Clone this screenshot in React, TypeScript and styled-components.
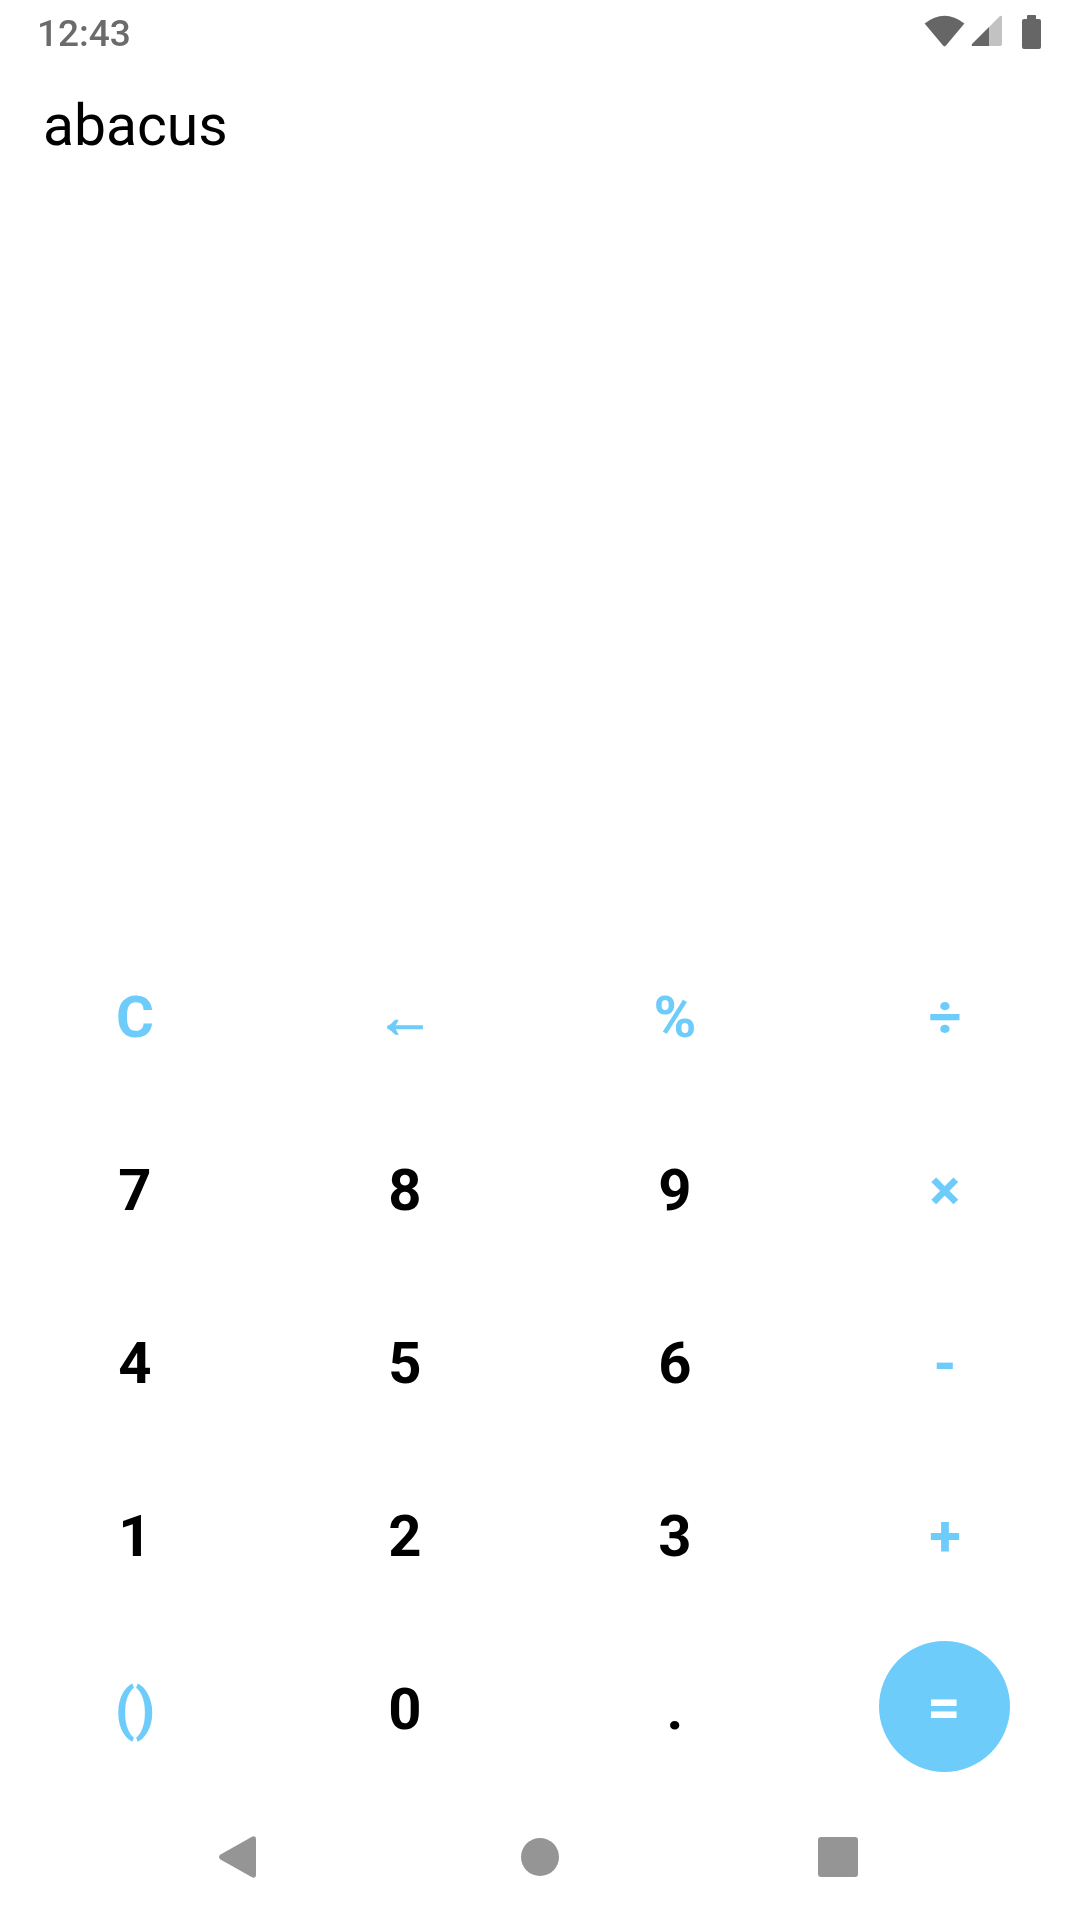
import React from 'react';
import styled, {createGlobalStyle} from 'styled-components';

const ACCENT = '#6eccfa';

const keys = [
    {label: 'C', accent: true},
    {label: '←', accent: true, heavy: true},
    {label: '%', accent: true},
    {label: '÷', accent: true},
    {label: '7'},
    {label: '8'},
    {label: '9'},
    {label: '×', accent: true},
    {label: '4'},
    {label: '5'},
    {label: '6'},
    {label: '-', accent: true},
    {label: '1'},
    {label: '2'},
    {label: '3'},
    {label: '+', accent: true},
    {label: '()', accent: true},
    {label: '0'},
    {label: '.'},
    {label: '=', round: true}
];

const App = () => {
    return (
        <Screen>
            <GlobalStyle />
            <StatusBar>
                <Clock>12:43</Clock>
                <StatusIcons>
                    <svg width='41' height='32' viewBox='0 0 41 32'>
                        <path d='M0.6 8.6 Q20.5 -7 40.4 8.6 L22 30.6 Q20.5 32.2 19 30.6 Z' fill='#666666' />
                    </svg>
                    <svg width='31' height='31' viewBox='0 0 31 31'>
                        <path d='M18 12 L29 1 Q31 0 31 2 L31 29 Q31 31 29 31 L18 31 Z' fill='#c2c2c2' />
                        <path d='M18 12 L1 29 Q0 31 2 31 L18 31 Z' fill='#666666' />
                    </svg>
                    <svg width='19' height='34' viewBox='0 0 19 34'>
                        <path d='M5 4 V1 Q5 0 6 0 H13 Q14 0 14 1 V4 H17 Q19 4 19 6 V32 Q19 34 17 34 H2 Q0 34 0 32 V6 Q0 4 2 4 Z' fill='#666666' />
                    </svg>
                </StatusIcons>
            </StatusBar>
            <Title>abacus</Title>
            <Spacer />
            <Keypad>
                {keys.map(key => (
                    <Key key={key.label}>
                        {key.round ? (
                            <RoundKey>{key.label}</RoundKey>
                        ) : (
                            <KeyLabel $accent={key.accent} $heavy={key.heavy}>
                                {key.label}
                            </KeyLabel>
                        )}
                    </Key>
                ))}
            </Keypad>
            <NavBar>
                <NavButton $nudge>
                    <svg width='37' height='42' viewBox='0 0 37 42'>
                        <path d='M1.5 18.5 L33 0.8 Q37 -0.8 37 3 L37 39 Q37 42.8 33 41.2 L1.5 23.5 Q-1.5 21 1.5 18.5 Z' fill='#959595' />
                    </svg>
                </NavButton>
                <NavButton>
                    <HomeDot />
                </NavButton>
                <NavButton $nudge>
                    <RecentSquare />
                </NavButton>
            </NavBar>
        </Screen>
    );
};

export default App;

const GlobalStyle = createGlobalStyle`
    body {
        margin: 0;
        background: #ffffff;
        font-family: Roboto, "Liberation Sans", sans-serif;
    }
`;

const Screen = styled.div`
    display: flex;
    width: 1080px;
    height: 1920px;
    flex-direction: column;
    overflow: hidden;
    will-change: opacity;
`;

const StatusBar = styled.div`
    display: flex;
    height: 63px;
    align-items: center;
    justify-content: space-between;
    padding: 0 39px 0 37px;
    box-sizing: border-box;
`;

const Clock = styled.div`
    padding-top: 4px;
    font-size: 37px;
    font-weight: 500;
    color: #6b6b6b;
`;

const StatusIcons = styled.div`
    display: flex;
    align-items: center;
    gap: 6px;

    svg:not(:last-child) {
        margin-bottom: 2px;
    }

    svg:last-child {
        margin-left: 14px;
    }
`;

const Title = styled.div`
    margin-top: 30px;
    padding-left: 43px;
    font-size: 57px;
    line-height: 66px;
    color: #000000;
`;

const Spacer = styled.div`
    flex: 1;
`;

const Keypad = styled.div`
    display: grid;
    grid-template-columns: repeat(4, 270px);
    grid-auto-rows: 173px;
`;

const Key = styled.div`
    display: flex;
    align-items: center;
    justify-content: center;
`;

const KeyLabel = styled.span<{$accent?: boolean; $heavy?: boolean}>`
    padding-top: 2px;
    font-size: 58px;
    font-weight: 700;
    color: ${props => (props.$accent ? ACCENT : '#000000')};
    -webkit-text-stroke: ${props => (props.$heavy ? `1.5px ${ACCENT}` : '0')};
`;

const RoundKey = styled.div`
    display: flex;
    width: 131px;
    height: 131px;
    margin: -2px 2px 0 0;
    align-items: center;
    justify-content: center;
    border-radius: 50%;
    background: ${ACCENT};
    font-size: 58px;
    font-weight: 700;
    color: #ffffff;
`;

const NavBar = styled.div`
    display: flex;
    height: 126px;
    align-items: center;
    justify-content: center;
`;

const NavButton = styled.div<{$nudge?: boolean}>`
    display: flex;
    width: 300px;
    align-items: center;
    justify-content: center;
    padding-right: ${props => (props.$nudge ? '5px' : '0')};
    box-sizing: border-box;
`;

const HomeDot = styled.div`
    width: 38px;
    height: 38px;
    border-radius: 50%;
    background: #959595;
`;

const RecentSquare = styled.div`
    width: 40px;
    height: 40px;
    border-radius: 3px;
    background: #959595;
`;
